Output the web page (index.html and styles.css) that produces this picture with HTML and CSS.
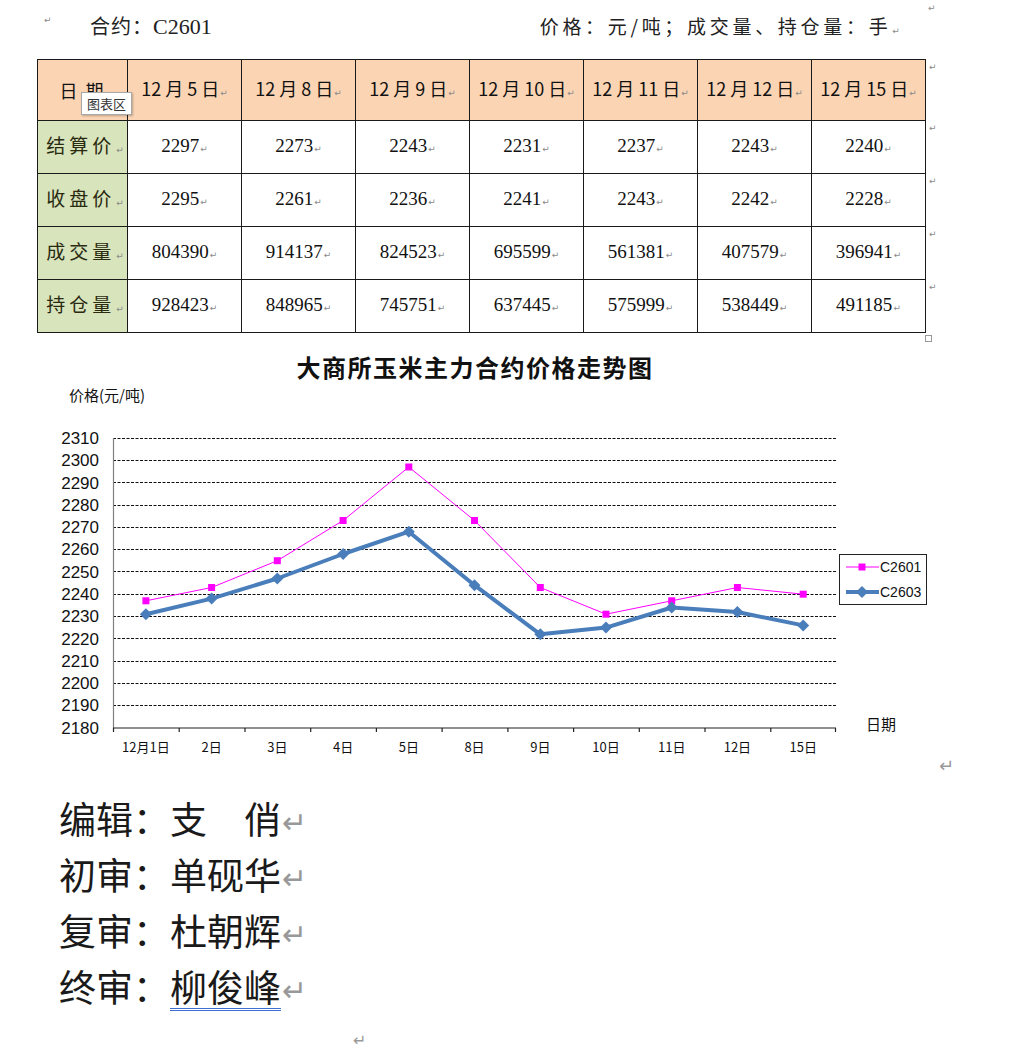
FILE: index.html
```html
<!DOCTYPE html>
<html lang="zh">
<head>
<meta charset="utf-8">
<title>大商所玉米主力合约</title>
<link rel="stylesheet" href="styles.css">
</head>
<body>
<div class="top">
  <span class="pm lead">↵</span>
  <span class="contract">合约：<span class="num">C2601</span></span>
  <span class="units">价格：元/吨；成交量、持仓量：手<span class="pm">↵</span></span>
  <span class="pm corner">↵</span>
</div>

<div class="tablewrap">
  <table class="data">
    <colgroup>
      <col class="c0"><col class="c"><col class="c"><col class="c"><col class="c"><col class="c"><col class="c"><col class="c"><col class="cm">
    </colgroup>
    <tr class="hd">
      <th class="lab">日 期</th>
      <th>12 月 5 日<span class="pm">↵</span></th>
      <th>12 月 8 日<span class="pm">↵</span></th>
      <th>12 月 9 日<span class="pm">↵</span></th>
      <th>12 月 10 日<span class="pm">↵</span></th>
      <th>12 月 11 日<span class="pm">↵</span></th>
      <th>12 月 12 日<span class="pm">↵</span></th>
      <th>12 月 15 日<span class="pm">↵</span></th>
      <td class="rm">↵</td>
    </tr>
    <tr>
      <th class="lab">结算价<span class="pm">↵</span></th>
      <td>2297<span class="pm">↵</span></td><td>2273<span class="pm">↵</span></td><td>2243<span class="pm">↵</span></td><td>2231<span class="pm">↵</span></td><td>2237<span class="pm">↵</span></td><td>2243<span class="pm">↵</span></td><td>2240<span class="pm">↵</span></td>
      <td class="rm">↵</td>
    </tr>
    <tr>
      <th class="lab">收盘价<span class="pm">↵</span></th>
      <td>2295<span class="pm">↵</span></td><td>2261<span class="pm">↵</span></td><td>2236<span class="pm">↵</span></td><td>2241<span class="pm">↵</span></td><td>2243<span class="pm">↵</span></td><td>2242<span class="pm">↵</span></td><td>2228<span class="pm">↵</span></td>
      <td class="rm">↵</td>
    </tr>
    <tr>
      <th class="lab">成交量<span class="pm">↵</span></th>
      <td>804390<span class="pm">↵</span></td><td>914137<span class="pm">↵</span></td><td>824523<span class="pm">↵</span></td><td>695599<span class="pm">↵</span></td><td>561381<span class="pm">↵</span></td><td>407579<span class="pm">↵</span></td><td>396941<span class="pm">↵</span></td>
      <td class="rm">↵</td>
    </tr>
    <tr>
      <th class="lab">持仓量<span class="pm">↵</span></th>
      <td>928423<span class="pm">↵</span></td><td>848965<span class="pm">↵</span></td><td>745751<span class="pm">↵</span></td><td>637445<span class="pm">↵</span></td><td>575999<span class="pm">↵</span></td><td>538449<span class="pm">↵</span></td><td>491185<span class="pm">↵</span></td>
      <td class="rm">↵</td>
    </tr>
  </table>
  <div class="tip">图表区</div>
</div>
<div class="tableend"><span class="endbox"></span></div>

<svg class="chart" width="1022" height="447" viewBox="0 345 1022 447" xmlns="http://www.w3.org/2000/svg">
  <defs>
    <marker id="sq" markerUnits="userSpaceOnUse" markerWidth="8" markerHeight="8" refX="4" refY="4">
      <rect x="0.5" y="0.5" width="7" height="7" fill="#ff00ff"/>
    </marker>
    <marker id="dm" markerUnits="userSpaceOnUse" markerWidth="14" markerHeight="14" refX="7" refY="7">
      <polygon points="7,1 13,7 7,13 1,7" fill="#4a7ebb"/>
    </marker>
  </defs>
  <text class="ctitle" x="475" y="375" text-anchor="middle">大商所玉米主力合约价格走势图</text>
  <text class="axt" x="69" y="399">价格(元/吨)</text>

  <g class="grid">
    <line x1="113" y1="436.5" x2="836" y2="436.5"/>
    <line x1="113" y1="458.5" x2="836" y2="458.5"/>
    <line x1="113" y1="480.5" x2="836" y2="480.5"/>
    <line x1="113" y1="503.5" x2="836" y2="503.5"/>
    <line x1="113" y1="525.5" x2="836" y2="525.5"/>
    <line x1="113" y1="547.5" x2="836" y2="547.5"/>
    <line x1="113" y1="569.5" x2="836" y2="569.5"/>
    <line x1="113" y1="592.5" x2="836" y2="592.5"/>
    <line x1="113" y1="614.5" x2="836" y2="614.5"/>
    <line x1="113" y1="636.5" x2="836" y2="636.5"/>
    <line x1="113" y1="659.5" x2="836" y2="659.5"/>
    <line x1="113" y1="681.5" x2="836" y2="681.5"/>
    <line x1="113" y1="703.5" x2="836" y2="703.5"/>
  </g>
  <line x1="113.5" y1="436" x2="113.5" y2="726" stroke="#808080" stroke-width="1.2"/>
  <line x1="113" y1="726" x2="836" y2="726" stroke="#222" stroke-width="1.2"/>
  <g class="ticks">
    <line x1="113.5" y1="726" x2="113.5" y2="730"/>
    <line x1="179.2" y1="726" x2="179.2" y2="730"/>
    <line x1="245" y1="726" x2="245" y2="730"/>
    <line x1="310.7" y1="726" x2="310.7" y2="730"/>
    <line x1="376.4" y1="726" x2="376.4" y2="730"/>
    <line x1="442.1" y1="726" x2="442.1" y2="730"/>
    <line x1="507.9" y1="726" x2="507.9" y2="730"/>
    <line x1="573.6" y1="726" x2="573.6" y2="730"/>
    <line x1="639.3" y1="726" x2="639.3" y2="730"/>
    <line x1="705" y1="726" x2="705" y2="730"/>
    <line x1="770.8" y1="726" x2="770.8" y2="730"/>
    <line x1="835.5" y1="726" x2="835.5" y2="730"/>
  </g>

  <g class="ylab">
    <text x="99" y="442">2310</text>
    <text x="99" y="464">2300</text>
    <text x="99" y="487">2290</text>
    <text x="99" y="509">2280</text>
    <text x="99" y="531">2270</text>
    <text x="99" y="553">2260</text>
    <text x="99" y="576">2250</text>
    <text x="99" y="598">2240</text>
    <text x="99" y="620">2230</text>
    <text x="99" y="643">2220</text>
    <text x="99" y="665">2210</text>
    <text x="99" y="687">2200</text>
    <text x="99" y="709">2190</text>
    <text x="99" y="732">2180</text>
  </g>
  <g class="xlab">
    <text x="145.9" y="750">12月1日</text>
    <text x="211.6" y="750">2日</text>
    <text x="277.3" y="750">3日</text>
    <text x="343.1" y="750">4日</text>
    <text x="408.8" y="750">5日</text>
    <text x="474.5" y="750">8日</text>
    <text x="540.3" y="750">9日</text>
    <text x="606" y="750">10日</text>
    <text x="671.7" y="750">11日</text>
    <text x="737.4" y="750">12日</text>
    <text x="803.2" y="750">15日</text>
  </g>
  <text class="axt" x="866" y="728">日期</text>

  <polyline class="s1" points="145.9,598.8 211.6,585.5 277.3,558.7 343.1,518.5 408.8,465 474.5,518.5 540.3,585.5 606,612.2 671.7,598.8 737.4,585.5 803.2,592.2"/>
  <polyline class="s2" points="145.9,612.2 211.6,596.6 277.3,576.5 343.1,552 408.8,529.7 474.5,583.2 540.3,632.3 606,625.6 671.7,605.5 737.4,610 803.2,623.4"/>

  <rect x="839.5" y="552.5" width="87" height="50" fill="#fff" stroke="#222" stroke-width="1"/>
  <polyline class="l1" points="846,565 862,565 879,565"/>
  <polyline class="l2" points="846,590 862,590 879,590"/>
  <text class="leg" x="880" y="570">C2601</text>
  <text class="leg" x="880" y="595">C2603</text>

  <text class="cpm" x="939" y="770">↵</text>
</svg>

<div class="sign">
  <div class="line">编辑：支　俏<span class="bpm">↵</span></div>
  <div class="line">初审：单砚华<span class="bpm">↵</span></div>
  <div class="line">复审：杜朝辉<span class="bpm">↵</span></div>
  <div class="line">终审：<span class="ul">柳俊峰</span><span class="bpm">↵</span></div>
</div>
<div class="last"><span class="bpm small">↵</span></div>
</body>
</html>
```

FILE: styles.css
```css
html, body {
  margin: 0;
  padding: 0;
  background: #fff;
}
body {
  width: 1022px;
  height: 1059px;
  overflow: hidden;
  font-family: "Noto Sans CJK SC", "Liberation Sans", sans-serif;
  color: #111;
}
.pm {
  font-family: "DejaVu Sans", sans-serif;
  font-size: 9px;
  color: #8a8a8a;
  margin-left: 1px;
  letter-spacing: 0;
}
.top {
  position: relative;
  display: flex;
  align-items: center;
  height: 50px;
  padding-left: 44px;
}
.top .lead {
  align-self: flex-start;
  margin-top: 15px;
  width: 46px;
  margin-left: 0;
}
.contract {
  font-size: 20px;
  letter-spacing: 1px;
  color: #222;
}
.num {
  font-family: "Liberation Serif", serif;
  font-size: 22px;
  letter-spacing: 0;
}
.units {
  margin-left: 328px;
  font-size: 19px;
  letter-spacing: 3.7px;
  color: #222;
}
.top .corner {
  align-self: flex-start;
  margin-top: 3px;
  margin-left: 28px;
}
.tablewrap {
  position: relative;
  margin-top: 9px;
  margin-left: 37px;
}
table.data {
  border-collapse: collapse;
  table-layout: fixed;
  width: 908px;
}
col.c0 { width: 90px; }
col.c { width: 114px; }
col.cm { width: 20px; }
table.data th,
table.data td {
  border: 1px solid #1a1a1a;
  text-align: center;
  padding: 0;
  font-weight: normal;
  white-space: nowrap;
  line-height: 24px;
}
table.data tr.hd th {
  height: 60px;
  background: #fbd4b4;
  font-size: 18px;
  color: #111;
}
table.data td {
  height: 52px;
  font-family: "Liberation Serif", serif;
  font-size: 19px;
  color: #111;
}
table.data th.lab {
  background: #d7e4bc;
  font-size: 19px;
  letter-spacing: 4px;
  color: #2a2a10;
  padding-left: 5px;
}
table.data tr.hd th.lab {
  background: #fbd4b4;
  padding-left: 0;
  letter-spacing: 2px;
}
table.data td.rm {
  border: none;
  height: auto;
  vertical-align: top;
  text-align: left;
  padding: 0 0 0 3px;
  line-height: 14px;
  font-family: "DejaVu Sans", sans-serif;
  font-size: 9px;
  color: #8a8a8a;
  background: transparent;
}
.tip {
  position: absolute;
  left: 44px;
  top: 33px;
  padding: 1px 5px;
  background: #fff;
  border: 1px solid #a8a8a8;
  box-shadow: 1px 1px 2px rgba(0,0,0,0.25);
  font-size: 13px;
  line-height: 19px;
  color: #333;
}
.tableend {
  height: 12px;
  padding-left: 925px;
}
.endbox {
  display: block;
  margin-top: 2px;
  width: 5px;
  height: 5px;
  border: 1px solid #999;
}
.chart {
  display: block;
}
.chart .ctitle {
  font-family: "Noto Sans CJK SC", sans-serif;
  font-weight: bold;
  font-size: 24px;
  letter-spacing: 1.5px;
  fill: #111;
}
.chart .axt {
  font-family: "Noto Sans CJK SC", sans-serif;
  font-size: 15px;
  fill: #111;
}
.chart .grid line {
  stroke: #111;
  stroke-width: 1;
  stroke-dasharray: 3 1.5;
}
.chart .ticks line {
  stroke: #222;
  stroke-width: 1.2;
}
.chart .ylab text {
  font-family: "Liberation Sans", sans-serif;
  font-size: 17px;
  text-anchor: end;
  fill: #111;
}
.chart .xlab text {
  font-family: "Noto Sans CJK SC", sans-serif;
  font-size: 13px;
  text-anchor: middle;
  fill: #111;
}
.chart .s1,
.chart .l1 {
  fill: none;
  stroke: #ff00ff;
  stroke-width: 1;
}
.chart .s2,
.chart .l2 {
  fill: none;
  stroke: #4a7ebb;
  stroke-width: 4;
  stroke-linejoin: round;
}
.chart .s1 {
  marker-start: url(#sq);
  marker-mid: url(#sq);
  marker-end: url(#sq);
}
.chart .l1 {
  marker-mid: url(#sq);
}
.chart .s2 {
  marker-start: url(#dm);
  marker-mid: url(#dm);
  marker-end: url(#dm);
}
.chart .l2 {
  marker-mid: url(#dm);
}
.chart .leg {
  font-family: "Liberation Sans", sans-serif;
  font-size: 14px;
  fill: #111;
}
.chart .cpm {
  font-family: "DejaVu Sans", sans-serif;
  font-size: 18px;
  fill: #999;
}
.sign {
  padding-left: 59px;
  margin-top: -4px;
}
.sign .line {
  height: 56px;
  line-height: 56px;
  font-size: 37px;
  color: #1a1a1a;
  white-space: nowrap;
}
.bpm {
  font-family: "DejaVu Sans", sans-serif;
  font-size: 30px;
  color: #999;
  vertical-align: 1px;
  margin-left: 1px;
}
.ul {
  text-decoration: underline double #3d6fd0;
  text-decoration-thickness: 1px;
  text-underline-offset: 6px;
}
.last {
  padding-left: 352px;
  margin-top: 14px;
  line-height: 24px;
}
.last .small {
  font-size: 16px;
}
```
